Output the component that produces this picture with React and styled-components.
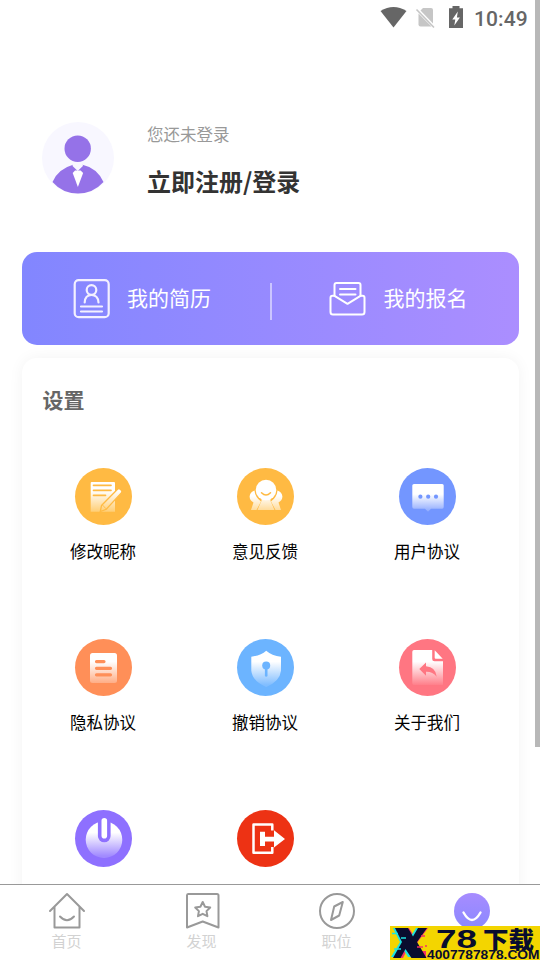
import React from "react";
import styled, { createGlobalStyle } from "styled-components";

const GlobalStyle = createGlobalStyle`
  * {
    box-sizing: border-box;
  }
  body {
    margin: 0;
    background: #fff;
    font-family: "Noto Sans CJK SC", "Noto Sans", sans-serif;
  }
`;

const Fade = ({ id, color, from = 0.4 }) => (
  <defs>
    <linearGradient id={id} x1="0" y1="10" x2="0" y2="46" gradientUnits="userSpaceOnUse">
      <stop offset={from} stopColor="#fff" />
      <stop offset="1" stopColor={color} />
    </linearGradient>
  </defs>
);

const EditIcon = () => (
  <>
    <Fade id="edit" color="#ffc966" from={0.35} />
    <path d="M16.7 14H39q1 0 1 1v28.7H15.7V15q0-1 1-1z" fill="url(#edit)" />
    <path d="M18.5 17.3H36M18.5 22.3H36M18.5 27.3H30.5" stroke="#ffba43" strokeWidth="1.7" strokeLinecap="round" />
    <path d="M26.5 37.5 42.5 21.3q1.4-1.2 2.8 0l1 1q1.2 1.300 0 2.600L31.300 41.300l-6 2.200z" fill="url(#edit)" stroke="#ffba43" strokeWidth="1.300" />
    <path d="m27.500 37 3.500 3.800" stroke="#ffba43" strokeWidth=".9" />
  </>
);

const FeedbackIcon = () => (
  <>
    <Fade id="feed" color="#ffd27f" from={0.5} />
    <path d="M17.500 22.500q-4.500 1.500-4.900 6 0 3.800 3.900 6L14 42h5.500l4.500-8.500Q18 29 17.500 22.500zM40.500 22.500q4.500 1.500 4.900 6 0 3.800-3.900 6L44 42h-5.500l-4.500-8.500Q40 29 40.500 22.500z" fill="url(#feed)" />
    <path d="M24.500 30h9q-.5 2.500 1 5l3 7h-17l3-7q1.500-2.500 1-5z" fill="url(#feed)" />
    <circle cx="29" cy="22" r="10.300" fill="#fff" />
    <path d="M24.500 24.700q4.500 4.500 9 0" fill="none" stroke="#ffba43" strokeWidth="1.500" strokeLinecap="round" />
  </>
);

const ChatIcon = () => (
  <>
    <Fade id="chat" color="#7d9dff" from={0.45} />
    <path d="M15 16h28.200q1.500 0 1.500 1.500V39q0 1.700-1.500 1.700H32l-3 3-3-3H15q-1.700 0-1.700-1.700V17.500Q13.300 16 15 16z" fill="url(#chat)" />
    <g fill="#7396ff">
      <circle cx="21.400" cy="28.700" r="2.100" />
      <circle cx="29.200" cy="28.700" r="2.100" />
      <circle cx="37" cy="28.700" r="2.100" />
    </g>
  </>
);

const PrivacyIcon = () => (
  <>
    <Fade id="privacy" color="#ffa67b" from={0.35} />
    <rect x="15" y="14" width="27" height="30" rx="2.500" fill="url(#privacy)" />
    <path d="M21.500 22.600H29M21.500 29.300h14M21.500 35.800h14" stroke="#ff8f58" strokeWidth="3.200" strokeLinecap="round" />
  </>
);

const ShieldIcon = () => (
  <>
    <Fade id="shield" color="#80bdff" from={0.35} />
    <path d="M29.200 11.700q5.500 4.800 14.800 6v14Q43 42 29.200 48 15.300 42 14.300 31.700v-14q9.400-1.200 14.900-6z" fill="url(#shield)" />
    <circle cx="29.200" cy="26.500" r="4" fill="#6cb4ff" />
    <path d="M29.200 28v8.500" stroke="#6cb4ff" strokeWidth="2.600" strokeLinecap="round" />
  </>
);

const AboutIcon = () => (
  <>
    <Fade id="about" color="#ff7f8a" from={0.35} />
    <path d="M15 11h18.200v9q0 2.300 2.300 2.300H44V46H15q-1.700 0-1.700-1.700V12.700Q13.300 11 15 11z" fill="url(#about)" />
    <path d="M35.700 11.300 43.700 19.800h-7q-1 0-1-1z" fill="#fff" />
    <path d="M20.300 30 27 23.500V27.300Q36.800 28 37.700 37.800 33.500 32.500 27 32.800v3.900z" fill="#ff7682" />
  </>
);

const PowerIcon = () => (
  <>
    <Fade id="power" color="#a18aff" from={0.35} />
    <circle cx="29" cy="29.700" r="18.300" fill="url(#power)" />
    <path d="M22.900 9h12.700v17a6.350 6.350 0 0 1-12.700 0z" fill="#8e70ff" />
    <rect x="26.500" y="8" width="5.600" height="20.500" rx="2.800" fill="#fff" />
  </>
);

const LogoutIcon = () => (
  <>
    <path d="M35.300 20.500v-6H16.500v28.300h18.800V37" fill="none" stroke="#fff" strokeWidth="2.500" strokeLinejoin="round" />
    <path d="M23 21.700h5v5h9V20.300L48 29 37 37.500v-6h-9V36h-5z" fill="#fff" />
  </>
);

const tools = [
  { label: "修改昵称", color: "#ffba43", Icon: EditIcon },
  { label: "意见反馈", color: "#ffba43", Icon: FeedbackIcon },
  { label: "用户协议", color: "#7396ff", Icon: ChatIcon },
  { label: "隐私协议", color: "#ff8f58", Icon: PrivacyIcon },
  { label: "撤销协议", color: "#6cb4ff", Icon: ShieldIcon },
  { label: "关于我们", color: "#ff7682", Icon: AboutIcon },
  { label: "", color: "#8e70ff", Icon: PowerIcon },
  { label: "", color: "#ed3214", Icon: LogoutIcon },
];

const HomeIcon = () => (
  <svg width="38" height="38" viewBox="0 0 38 38" fill="none" stroke="#999" strokeWidth="2" strokeLinecap="round" strokeLinejoin="round">
    <path d="M2 19 19 2l17 17M6.500 15v20.500h25V15" />
    <path d="M12 24.500q7 7.500 14 0" />
  </svg>
);

const FindIcon = () => (
  <svg width="38" height="38" viewBox="0 0 38 38" fill="none" stroke="#999" strokeWidth="2" strokeLinejoin="round">
    <path d="M5 2h29q1.500 0 1.500 1.500V35.500L19.700 29.500 4 35.500v-32Q4 2 5 2z" />
    <path d="m19.700 10 2.300 4.700 5.200.8-3.700 3.600.9 5.100-4.700-2.400-4.700 2.400.9-5.100-3.700-3.600 5.200-.8z" />
  </svg>
);

const JobIcon = () => (
  <svg width="38" height="38" viewBox="0 0 38 38" fill="none" stroke="#999" strokeWidth="2" strokeLinejoin="round">
    <circle cx="19" cy="19" r="17" />
    <path d="M24.800 10 16.200 14.500 13 28l8.200-4.500z" />
  </svg>
);

const MineIcon = () => (
  <svg width="38" height="38" viewBox="0 0 38 38">
    <defs>
      <linearGradient id="mine" x1="0" y1="0" x2="0" y2="1">
        <stop stopColor="#a78cff" />
        <stop offset="1" stopColor="#8a88ff" />
      </linearGradient>
    </defs>
    <circle cx="19" cy="19" r="18" fill="url(#mine)" />
    <path d="M10.500 20.500q8.500 15 17 0" fill="none" stroke="#fff" strokeWidth="2.400" strokeLinecap="round" />
  </svg>
);

const tabs = [
  { label: "首页", Icon: HomeIcon },
  { label: "发现", Icon: FindIcon },
  { label: "职位", Icon: JobIcon },
  { label: "", Icon: MineIcon },
];

const StatusIcons = () => (
  <svg width="86" height="24" viewBox="380 6 86 24">
    <path d="M380.500 11Q393.500 2.800 406.500 11L393.500 27.500z" fill="#666" />
    <path d="M420.500 10.500 423 8h8q2 0 2 2v13.500z" fill="#c6c6c6" />
    <path d="M418.500 13.500v11q0 2 2 2h11z" fill="#c6c6c6" />
    <path d="m416.500 9.500 17.500 18" stroke="#c6c6c6" strokeWidth="1.600" />
    <path d="M452.500 6h7v2.200h3.500V28h-14V8.200h3.500z" fill="#666" />
    <path d="m457.800 11.500-5.500 8h3l-1 6 5.600-8h-3z" fill="#fff" />
  </svg>
);

const Avatar = () => (
  <svg width="72" height="72" viewBox="0 0 72 72">
    <circle cx="36" cy="36" r="36" fill="#f8f7ff" />
    <circle cx="35.700" cy="26.700" r="13.200" fill="#9572e8" />
    <path d="M10.500 60Q16 47 31 42.800l4.700 4.400 4.800-4.400Q55 46 61.500 60 51 71.500 36 71.500 20.500 71.500 10.500 60z" fill="#9572e8" />
    <path d="m31 43 4.700 4.500 4.800-4.500" fill="none" stroke="#f8f7ff" strokeWidth="2" />
    <path d="m33 48.500h5.600l2.500 2.500-5.200 14-5.200-14z" fill="#fff" />
  </svg>
);

const ResumeIcon = () => (
  <svg width="37" height="40" viewBox="0 0 37 40" fill="none" stroke="#f3f0ff" strokeWidth="2.200" strokeLinecap="round">
    <rect x="1.700" y="1.200" width="34" height="37" rx="4" />
    <circle cx="18.500" cy="11" r="4.800" />
    <path d="M11.700 23.500q.3-7.500 6.800-7.500t7 7.500M8 27.500h21M8 32.500h21" />
  </svg>
);

const MailIcon = () => (
  <svg width="38" height="34" viewBox="0 0 38 34" fill="none" stroke="#fff" strokeWidth="2" strokeLinecap="round" strokeLinejoin="round">
    <path d="M5.500 14V3q0-2 2-2h22q2 0 2 2v11" />
    <path d="M3.500 13.800h2l13 8 13-8h2q2 0 2 2V30q0 2.500-2.500 2.500H4Q1.500 32.500 1.500 30V15.800q0-2 2-2z" />
    <path d="M11 7h15.500M11 12.500h15.500" />
  </svg>
);

const WatermarkLogo = () => (
  <svg width="150" height="34" viewBox="0 0 150 34">
    <path d="M7 2h12l4.500 7 3.500-7h11L27 17l5 8h4v7H22l-5-8-4 8H4l9-15z" fill="#f43265" />
    <path d="M3 2h13l5 8 5-8h8L24 16l7 15H18l-5-8-5 8H1l9-15z" fill="#1de3e0" />
    <path d="M5 2h13l5 8.500L28 2h9L27 16l9.500 16H21.500l-6-9-5 9H3l9-16z" fill="#090d2e" />
    <path d="M2 7.500h6M11 12h5M4 23h7" stroke="#1de3e0" strokeWidth="1.500" />
    <path d="M31 10h4M27 21h6M35 20h2" stroke="#f43265" strokeWidth="1.500" />
    <text x="46" y="21.500" fontSize="26" fontWeight="700" fontFamily="Liberation Sans, sans-serif" textLength="41" lengthAdjust="spacingAndGlyphs">78</text>
    <text x="93" y="21.500" fontSize="23" fontWeight="900" textLength="51" lengthAdjust="spacingAndGlyphs">下载</text>
    <text x="37" y="33" fontSize="12.500" fontWeight="700" fontFamily="Liberation Sans, sans-serif" textLength="112.500" lengthAdjust="spacingAndGlyphs">4007787878.COM</text>
  </svg>
);

const App = () => (
  <Page>
    <GlobalStyle />
    <StatusBar>
      <StatusIcons />
      <Clock>10:49</Clock>
    </StatusBar>
    <Profile>
      <Avatar />
      <ProfileText>
        <Hint>您还未登录</Hint>
        <LoginTitle>立即注册/登录</LoginTitle>
      </ProfileText>
    </Profile>
    <Banner>
      <BannerItem $gap="17px" $left="51px">
        <ResumeIcon />
        <BannerLabel>我的简历</BannerLabel>
      </BannerItem>
      <BannerDivider />
      <BannerItem $gap="17px" $left="57px">
        <MailIcon />
        <BannerLabel>我的报名</BannerLabel>
      </BannerItem>
    </Banner>
    <SettingsCard>
      <SettingsTitle>设置</SettingsTitle>
      <ToolGrid>
        {tools.map(({ label, color, Icon }, i) => (
          <Tool key={i}>
            <ToolCircle $color={color}>
              <svg width="57" height="57" viewBox="0 0 57 57">
                <Icon />
              </svg>
            </ToolCircle>
            <ToolLabel>{label}</ToolLabel>
          </Tool>
        ))}
      </ToolGrid>
    </SettingsCard>
    <TabBar>
      {tabs.map(({ label, Icon }, i) => (
        <Tab key={i}>
          <Icon />
          <TabLabel>{label}</TabLabel>
        </Tab>
      ))}
    </TabBar>
    <ScrollThumb />
    <Watermark>
      <WatermarkLogo />
    </Watermark>
  </Page>
);

export default App;

const Page = styled.div`
  display: flex;
  flex-direction: column;
  position: relative;
  width: 540px;
  height: 960px;
  overflow: hidden;
  background: #fff;
`;

const StatusBar = styled.div`
  display: flex;
  flex: none;
  justify-content: flex-end;
  align-items: center;
  height: 36px;
  padding-right: 12px;
  gap: 8px;
`;

const Clock = styled.div`
  width: 54px;
  font-family: Roboto, sans-serif;
  font-size: 21px;
  font-weight: 500;
  letter-spacing: 0.1px;
  line-height: 24px;
  margin-top: 2px;
  color: #666;
`;

const Profile = styled.div`
  display: flex;
  flex: none;
  height: 216px;
  padding: 86px 0 0 42px;
  gap: 33px;
`;

const ProfileText = styled.div`
  display: flex;
  flex-direction: column;
  gap: 17px;
`;

const Hint = styled.div`
  font-size: 16.5px;
  line-height: 24px;
  color: #999;
`;

const LoginTitle = styled.div`
  font-size: 24px;
  font-weight: 700;
  line-height: 36px;
  color: #333;
`;

const Banner = styled.div`
  display: flex;
  flex: none;
  align-items: center;
  width: 497px;
  height: 93px;
  margin-left: 22px;
  border-radius: 15px;
  background: linear-gradient(90deg, #8286ff, #ab8eff);
`;

const BannerItem = styled.div`
  display: flex;
  flex: 0 0 248px;
  align-items: center;
  gap: ${(p) => p.$gap};
  padding-left: ${(p) => p.$left};
`;

const BannerLabel = styled.div`
  margin-top: -3px;
  font-size: 21px;
  line-height: 30px;
  white-space: nowrap;
  color: #fff;
`;

const BannerDivider = styled.div`
  flex: none;
  width: 1.5px;
  height: 37px;
  margin-top: 6px;
  background: rgba(255, 255, 255, 0.5);
`;

/* runs on underneath the tab bar */
const SettingsCard = styled.div`
  flex: none;
  width: 497px;
  height: 602px;
  margin: 13px 0 -76px 22px;
  border-radius: 15px;
  box-shadow: 0 0 15px rgba(0, 0, 0, 0.05);
`;

const SettingsTitle = styled.div`
  padding: 25px 0 0 20.5px;
  font-size: 21px;
  font-weight: 700;
  line-height: 32px;
  color: #666;
`;

const ToolGrid = styled.div`
  display: grid;
  grid-template-columns: repeat(3, 162px);
  grid-auto-rows: 171px;
  padding-top: 53px;
`;

const Tool = styled.div`
  display: flex;
  flex-direction: column;
  align-items: center;
  gap: 14px;
`;

const ToolCircle = styled.div`
  width: 57px;
  height: 57px;
  border-radius: 50%;
  background: ${(p) => p.$color};
`;

const ToolLabel = styled.div`
  font-size: 16.5px;
  line-height: 24px;
  color: #000;
`;

const TabBar = styled.div`
  display: grid;
  flex: none;
  grid-template-columns: repeat(4, 135px);
  position: relative;
  height: 76px;
  border-top: 1px solid #999;
  background: #fff;
`;

const Tab = styled.div`
  display: flex;
  flex-direction: column;
  align-items: center;
  padding: 7px 2px 0 0;
`;

const TabLabel = styled.div`
  font-size: 15px;
  line-height: 22px;
  color: #d2d2d2;
`;

const ScrollThumb = styled.div`
  position: absolute;
  top: 0;
  right: 0;
  width: 5px;
  height: 747px;
  background: #b8b8b8;
`;

const Watermark = styled.div`
  position: absolute;
  right: 0;
  bottom: 0;
  width: 150px;
  height: 34px;
  background: #f3d500;

  svg {
    display: block;
    overflow: visible;
  }
  text {
    fill: #090d2e;
  }
`;
